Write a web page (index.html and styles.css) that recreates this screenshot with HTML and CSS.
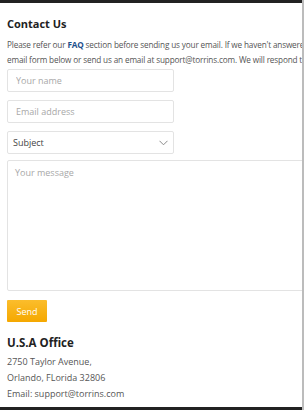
FILE: index.html
```html
<!DOCTYPE html>
<html lang="en">
<head>
  <meta charset="UTF-8" />
  <meta name="viewport" content="width=device-width, initial-scale=1.0" />
  <title>Contact Us</title>
  <link rel="stylesheet" href="styles.css">
</head>
<body>

  <div class="topbar"></div>

  <!-- Contact Section -->
  <div class="page">
    <h2 class="title">Contact Us</h2>
    <p class="intro">
      Please refer our <a href="#">FAQ</a> section before sending us your email. If we haven't answered your question, please use the<br>
      email form below or send us an email at support@torrins.com. We will respond to you within 24 hours.
    </p>

    <form class="contact-form">
      <input class="field" placeholder="Your name" />
      <input class="field" placeholder="Email address" />
      <div class="select-wrap">
        <select class="field select">
          <option>Subject</option>
        </select>
        <svg class="chevron" width="9" height="6" viewBox="0 0 9 6"><path d="M0.5 0.8 L4.5 4.8 L8.5 0.8" fill="none" stroke="#8a8a8a" stroke-width="1"/></svg>
      </div>
      <textarea class="message" placeholder="Your message"></textarea>
      <button type="button" class="send">Send</button>
    </form>

    <!-- Office -->
    <h3 class="office-title">U.S.A Office</h3>
    <div class="office">
      <div>2750 Taylor Avenue,</div>
      <div>Orlando, FLorida 32806</div>
      <div>Email: support@torrins.com</div>
    </div>
  </div>

  <div class="bottombar"></div>

</body>
</html>
```

FILE: styles.css
```css
html, body {
  margin: 0;
  padding: 0;
  overflow: hidden;
}

body {
  font-family: "Open Sans", "Noto Sans", sans-serif;
  background: #fff;
  color: #333;
  width: 304px;
  height: 410px;
  display: flex;
  flex-direction: column;
  border-right: 2px solid #bcbcbc;
  box-sizing: border-box;
}

.topbar,
.bottombar {
  height: 3px;
  background-color: #222;
  flex: none;
}

.page {
  flex: 1;
  padding: 13px 0 0 7px;
  overflow: hidden;
}

.title {
  font-size: 11px;
  font-weight: 700;
  margin: 0;
  color: #222;
  line-height: 15px;
}

.intro {
  margin: 6px 0 0;
  font-size: 8.2px;
  letter-spacing: -0.15px;
  line-height: 15px;
  color: #555;
  white-space: nowrap;
}

.intro a {
  color: #1d4f8c;
  font-weight: 700;
  text-decoration: none;
}

.contact-form {
  display: flex;
  flex-direction: column;
  align-items: flex-start;
  margin-top: 2px;
}

.field {
  display: block;
  width: 167px;
  height: 23px;
  box-sizing: border-box;
  border: 1px solid #e3e3e3;
  border-radius: 2px;
  padding: 0 8px;
  margin: 0 0 8px;
  font-family: inherit;
  font-size: 9px;
  color: #333;
  background: #fff;
  outline: none;
}

.field::placeholder,
.message::placeholder {
  color: #a8a8a8;
}

.select-wrap {
  position: relative;
}

.select {
  appearance: none;
  -webkit-appearance: none;
  padding-left: 5px;
  color: #444;
  margin-bottom: 6px;
}

.chevron {
  position: absolute;
  right: 6px;
  top: 9px;
}

.message {
  display: block;
  width: 320px;
  height: 131px;
  box-sizing: border-box;
  border: 1px solid #e3e3e3;
  border-radius: 2px;
  padding: 5px 7px;
  margin: 0;
  font-family: inherit;
  font-size: 9px;
  resize: none;
  outline: none;
}

.send {
  margin-top: 9px;
  width: 40px;
  height: 22px;
  border: none;
  border-radius: 1px;
  background: linear-gradient(#fbbd2c, #f5a800);
  color: #fff;
  font-family: inherit;
  font-size: 9px;
  cursor: pointer;
}

.office-title {
  font-size: 11.5px;
  font-weight: 700;
  color: #222;
  margin: 13px 0 0;
  line-height: 16px;
}

.office {
  margin-top: 3px;
  font-size: 9px;
  line-height: 16px;
  color: #555;
}
```
